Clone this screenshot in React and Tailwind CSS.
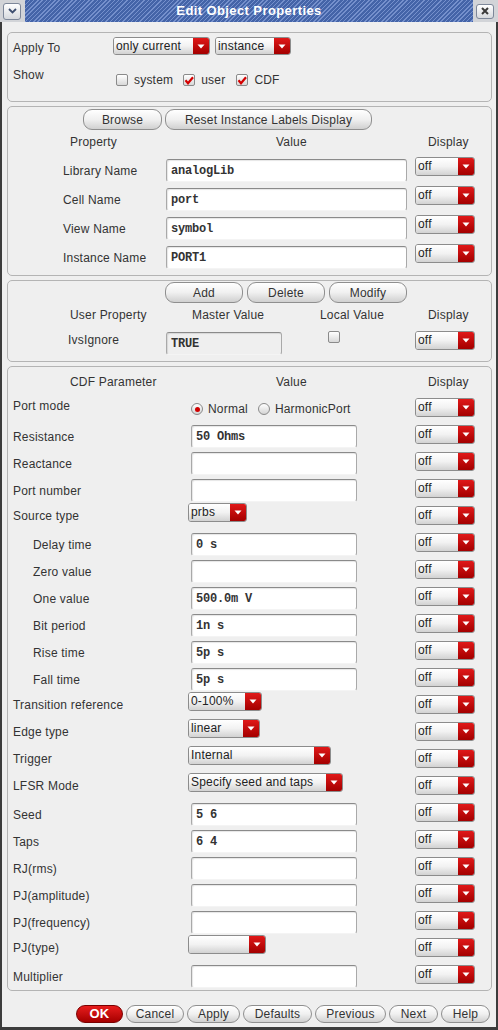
import React from 'react';

const Arrow = () => (
  <svg width="8" height="5" viewBox="0 0 8 5">
    <path d="M0.5 0.5h7L4 4.5z" fill="#fff" />
  </svg>
);

function Combo({ value = '', w, h = 'h-[19px]' }) {
  return (
    <div className={`${w} ${h} flex shrink-0 rounded-[3px] border border-[#8c8c8c] overflow-hidden`}>
      <div className="flex-1 min-w-0 pl-[2px] flex items-center pb-[1px] text-[12px] text-[#222] whitespace-nowrap bg-linear-to-b from-[#ffffff] via-[#f2f2f2] to-[#d2d2d2]">
        {value}
      </div>
      <div className="w-[16px] flex items-center justify-center bg-linear-to-b from-[#e01818] to-[#a40000]">
        <Arrow />
      </div>
    </div>
  );
}

function Field({ value = '', w = 'w-[166px]', bg = 'bg-white' }) {
  return (
    <div
      className={`${w} h-[23px] ${bg} shrink-0 rounded-[3px] border border-[#a9a9a9] border-t-[#8a8a8a] border-b-[#f4f4f4] shadow-[inset_1px_1px_1px_rgba(0,0,0,0.10)] pl-[4px] flex items-center font-['Liberation_Mono',monospace] font-bold text-[12px] tracking-[-0.2px] text-[#333] whitespace-pre`}
    >
      {value}
    </div>
  );
}

function Btn({ children, w, h = 'h-[21px]' }) {
  return (
    <div
      className={`${w} ${h} shrink-0 rounded-[9px] border border-[#8f8f8f] bg-linear-to-b from-[#ffffff] via-[#f0f0f0] to-[#d0d0d0] flex items-center justify-center text-[12px] text-[#333]`}
    >
      {children}
    </div>
  );
}

function Check({ on }) {
  return (
    <div className="w-[12px] h-[12px] shrink-0 rounded-[2px] border border-[#8a8a8a] bg-linear-to-b from-white to-[#d8d8d8] flex items-center justify-center">
      {on && (
        <svg width="10" height="9" viewBox="0 0 10 9">
          <path d="M1.5 4.2 L4 7.2 L9 1.2" stroke="#d40000" strokeWidth="2.2" fill="none" />
        </svg>
      )}
    </div>
  );
}

function Radio({ on }) {
  return (
    <div className="w-[12px] h-[12px] shrink-0 rounded-full border border-[#8a8a8a] bg-linear-to-b from-white to-[#d4d4d4] flex items-center justify-center">
      {on && <div className="w-[5px] h-[5px] rounded-full bg-[#d00000]" />}
    </div>
  );
}

const cdfRows = [
  { label: 'Port mode', kind: 'radio' },
  { label: 'Resistance', kind: 'field', value: '50 Ohms' },
  { label: 'Reactance', kind: 'field' },
  { label: 'Port number', kind: 'field' },
  { label: 'Source type', kind: 'combo', value: 'prbs', w: 'w-[59px]' },
  { label: 'Delay time', kind: 'field', value: '0 s', indent: true },
  { label: 'Zero value', kind: 'field', indent: true },
  { label: 'One value', kind: 'field', value: '500.0m V', indent: true },
  { label: 'Bit period', kind: 'field', value: '1n s', indent: true },
  { label: 'Rise time', kind: 'field', value: '5p s', indent: true },
  { label: 'Fall time', kind: 'field', value: '5p s', indent: true },
  { label: 'Transition reference', kind: 'combo', value: '0-100%', w: 'w-[74px]' },
  { label: 'Edge type', kind: 'combo', value: 'linear', w: 'w-[72px]' },
  { label: 'Trigger', kind: 'combo', value: 'Internal', w: 'w-[143px]' },
  { label: 'LFSR Mode', kind: 'combo', value: 'Specify seed and taps', w: 'w-[155px]' },
  { label: 'Seed', kind: 'field', value: '5 6' },
  { label: 'Taps', kind: 'field', value: '6 4' },
  { label: 'RJ(rms)', kind: 'field' },
  { label: 'PJ(amplitude)', kind: 'field' },
  { label: 'PJ(frequency)', kind: 'field' },
  { label: 'PJ(type)', kind: 'combo', value: '', w: 'w-[78px]' },
  { label: 'Multiplier', kind: 'field', last: true },
];

function CdfRow({ row }) {
  const pad = row.indent ? 'pl-[25px]' : 'pl-[5px]';
  return (
    <div className={`flex items-start ${row.last ? 'h-[24px]' : 'h-[27px]'}`}>
      {row.kind === 'field' && (
        <>
          <div className={`w-[180px] h-[23px] flex items-center ${pad}`}>{row.label}</div>
          <div className="w-[227px] pl-[3px]">
            <Field value={row.value} />
          </div>
        </>
      )}
      {row.kind === 'combo' && (
        <>
          <div className={`w-[180px] h-[19px] flex items-center ${pad}`}>{row.label}</div>
          <div className="w-[227px] -mt-[3px]">
            <Combo value={row.value} w={row.w} />
          </div>
        </>
      )}
      {row.kind === 'radio' && (
        <>
          <div className={`w-[180px] h-[15px] flex items-center ${pad}`}>{row.label}</div>
          <div className="w-[227px] pl-[3px] mt-[4px] flex items-center">
            <Radio on />
            <span className="ml-[5px]">Normal</span>
            <span className="ml-[10px]"><Radio /></span>
            <span className="ml-[5px]">HarmonicPort</span>
          </div>
        </>
      )}
      <Combo value="off" w="w-[60px]" />
    </div>
  );
}

export default function App() {
  return (
    <div className="w-[498px] h-[1030px] flex flex-col bg-[#efefef] font-['Liberation_Sans',Arial,sans-serif] text-[12px] leading-[14px] tracking-[0.2px] text-[#333]">
      {/* title bar */}
      <div className="h-[22px] flex bg-[#d2d4d8] shrink-0">
        <div className="w-[25px] flex items-center pl-[3px]">
          <div className="w-[18px] h-[17px] rounded-[3px] border border-[#7d8799] bg-linear-to-b from-white to-[#d6d9de] flex items-center justify-center">
            <svg width="9" height="6" viewBox="0 0 9 6">
              <path d="M1 1 L4.5 4.5 L8 1" stroke="#3e4f70" strokeWidth="1.8" fill="none" />
            </svg>
          </div>
        </div>
        <div className="flex-1 flex items-center justify-center bg-[repeating-linear-gradient(135deg,#7590cc_0px,#7590cc_1px,#4464a8_1px,#4464a8_3px)] text-white font-bold text-[13px] tracking-[0.4px]">
          Edit Object Properties
        </div>
        <div className="w-[25px] flex items-center pl-[3px]">
          <div className="w-[18px] h-[15px] rounded-[3px] border border-[#7d8799] bg-linear-to-b from-white to-[#d6d9de] flex items-center justify-center">
            <svg width="8" height="8" viewBox="0 0 8 8">
              <path d="M1 1 L7 7 M7 1 L1 7" stroke="#3a3a3a" strokeWidth="2" />
            </svg>
          </div>
        </div>
      </div>

      {/* body */}
      <div className="flex-1 flex flex-col border-l-2 border-r-2 border-b-[3px] border-[#3c3c3c] pl-[5px]">
        {/* apply to */}
        <div className="mt-[10px] w-[485px] h-[70px] rounded-[5px] border border-[#b4b4b4] pt-[4px]">
          <div className="flex items-start">
            <div className="w-[105px] pl-[5px] mt-[4px]">Apply To</div>
            <Combo value="only current" w="w-[97px]" h="h-[18px]" />
            <div className="ml-[5px]">
              <Combo value="instance" w="w-[76px]" h="h-[18px]" />
            </div>
          </div>
          <div className="flex items-start mt-[13px]">
            <div className="w-[105px] pl-[5px]">Show</div>
            <div className="flex items-center mt-[5px] pl-[3px]">
              <Check />
              <span className="ml-[6px]">system</span>
              <span className="ml-[10px]"><Check on /></span>
              <span className="ml-[6px]">user</span>
              <span className="ml-[11px]"><Check on /></span>
              <span className="ml-[6px]">CDF</span>
            </div>
          </div>
        </div>

        {/* instance properties */}
        <div className="mt-[4px] w-[485px] h-[170px] rounded-[5px] border border-[#b4b4b4] pt-[2px]">
          <div className="flex pl-[75px] gap-[3px]">
            <Btn w="w-[79px]">Browse</Btn>
            <Btn w="w-[207px]">Reset Instance Labels Display</Btn>
          </div>
          <div className="flex mt-[5px]">
            <div className="w-[268px] pl-[62px]">Property</div>
            <div className="w-[152px]">Value</div>
            <div>Display</div>
          </div>
          <div className="mt-[8px]">
            {[
              ['Library Name', 'analogLib'],
              ['Cell Name', 'port'],
              ['View Name', 'symbol'],
              ['Instance Name', 'PORT1'],
            ].map(([label, value]) => (
              <div key={label} className="flex items-start h-[29px]">
                <div className="w-[158px] pl-[55px] h-[23px] mt-[2px] flex items-center">{label}</div>
                <div className="w-[249px] mt-[2px]">
                  <Field value={value} w="w-[241px]" />
                </div>
                <Combo value="off" w="w-[60px]" />
              </div>
            ))}
          </div>
        </div>

        {/* user properties */}
        <div className="mt-[4px] w-[485px] h-[82px] rounded-[5px] border border-[#b4b4b4] pt-[1px]">
          <div className="flex pl-[157px] gap-[4px]">
            <Btn w="w-[78px]">Add</Btn>
            <Btn w="w-[78px]">Delete</Btn>
            <Btn w="w-[78px]">Modify</Btn>
          </div>
          <div className="flex mt-[5px]">
            <div className="w-[184px] pl-[62px]">User Property</div>
            <div className="w-[128px]">Master Value</div>
            <div className="w-[108px]">Local Value</div>
            <div>Display</div>
          </div>
          <div className="flex items-start mt-[9px]">
            <div className="w-[158px] pl-[60px] mt-[2px]">IvsIgnore</div>
            <div className="w-[162px] mt-[1px]">
              <Field value="TRUE" w="w-[116px]" bg="bg-[#efefef]" />
            </div>
            <div className="w-[87px]">
              <Check />
            </div>
            <Combo value="off" w="w-[60px]" />
          </div>
        </div>

        {/* CDF parameters */}
        <div className="mt-[4px] w-[485px] h-[625px] rounded-[5px] border border-[#b4b4b4] pt-[8px]">
          <div className="flex">
            <div className="w-[268px] pl-[62px]">CDF Parameter</div>
            <div className="w-[152px]">Value</div>
            <div>Display</div>
          </div>
          <div className="mt-[9px]">
            {cdfRows.map((row) => (
              <CdfRow key={row.label} row={row} />
            ))}
          </div>
        </div>

        {/* action buttons */}
        <div className="mt-[14px] flex justify-end pr-[6px] gap-[3px]">
          <div className="w-[47px] h-[18px] rounded-[9px] border border-[#7a0000] bg-linear-to-b from-[#e81c1c] to-[#a60000] flex items-center justify-center text-white font-bold text-[13px]">
            OK
          </div>
          <Btn w="w-[58px]" h="h-[18px]">Cancel</Btn>
          <Btn w="w-[53px]" h="h-[18px]">Apply</Btn>
          <Btn w="w-[69px]" h="h-[18px]">Defaults</Btn>
          <Btn w="w-[71px]" h="h-[18px]">Previous</Btn>
          <Btn w="w-[49px]" h="h-[18px]">Next</Btn>
          <Btn w="w-[49px]" h="h-[18px]">Help</Btn>
        </div>
      </div>
    </div>
  );
}
